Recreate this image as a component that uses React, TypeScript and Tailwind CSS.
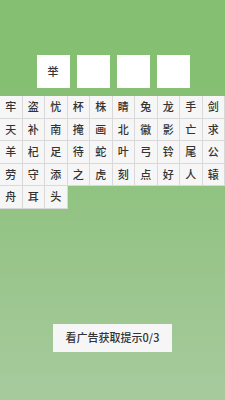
const rows = [
  ["牢", "盗", "忧", "杯", "株", "睛", "兔", "龙", "手", "剑"],
  ["天", "补", "南", "掩", "画", "北", "徽", "影", "亡", "求"],
  ["羊", "杞", "足", "待", "蛇", "叶", "弓", "铃", "尾", "公"],
  ["劳", "守", "添", "之", "虎", "刻", "点", "好", "人", "辕"],
  ["舟", "耳", "头"],
];

const answer = ["举", "", "", ""];

export default function App() {
  const chars = rows.flat();
  return (
    <div
      className="relative w-[225px] h-[400px] overflow-hidden bg-gradient-to-b from-[#85bf72] from-[20%] to-[#a7ca9d]"
      style={{ fontFamily: '"Noto Sans CJK SC", "Noto Sans", sans-serif' }}
    >
      <div className="pt-[55px] flex justify-center gap-[7px] pl-[1px]">
        {answer.map((c, i) => (
          <div
            key={i}
            className="w-[33px] h-[33px] bg-white flex items-center justify-center text-[11px] font-medium text-[#333]"
          >
            {c}
          </div>
        ))}
      </div>

      <div className="mt-[8px] grid grid-cols-10 w-[225px]">
        {chars.map((c, i) => (
          <div
            key={i}
            className="h-[22.5px] bg-[#f6f6f6] border-r border-b border-[#d9d9d9] flex items-center justify-center text-[11px] font-medium text-[#333] leading-none"
          >
            {c}
          </div>
        ))}
      </div>

      <div className="mt-[115px] flex justify-center">
        <div className="w-[119px] h-[28px] bg-[#f6f6f6] flex items-center justify-center text-[11px] font-medium text-[#333]">
          看广告获取提示0/3
        </div>
      </div>
    </div>
  );
}
